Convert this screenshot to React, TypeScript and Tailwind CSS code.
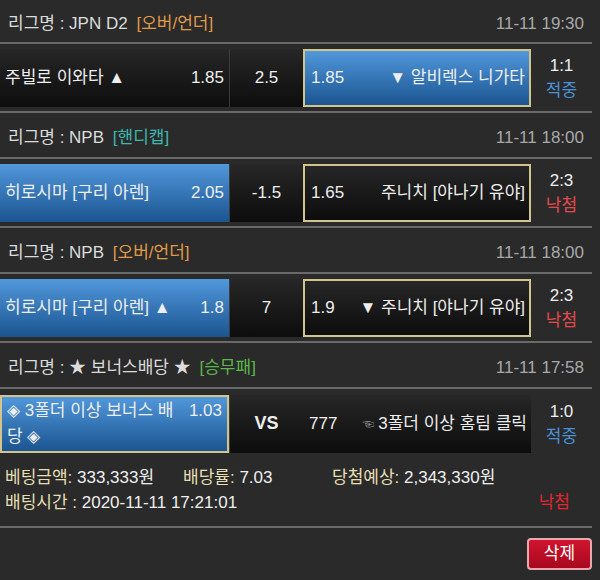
import React from 'react';

type CellProps = {
  blue?: boolean;
  selected?: boolean;
  className?: string;
  children: React.ReactNode;
};

const Cell: React.FC<CellProps> = ({ blue, selected, className = '', children }) => (
  <div
    className={`h-[58px] flex items-center ${
      blue ? 'bg-gradient-to-b from-[#5198dc] to-[#1b5591]' : 'bg-gradient-to-b from-[#272727] to-[#0d0d0d]'
    } ${selected ? 'border-2 border-[#d3c48c]' : ''} ${className}`}
  >
    {children}
  </div>
);

type BlockProps = {
  league: string;
  tag: string;
  tagColor: string;
  time: string;
  headerH: string;
  home: React.ReactNode;
  homeOdds: string;
  homeOddsTop?: boolean;
  homeBlue?: boolean;
  homeSel?: boolean;
  draw: React.ReactNode;
  away: React.ReactNode;
  awayOdds: string;
  awayBlue?: boolean;
  awaySel?: boolean;
  score: string;
  status: string;
  statusColor: string;
  last?: boolean;
};

const Block: React.FC<BlockProps> = (p) => (
  <div>
    <div className={`${p.headerH} flex items-center justify-between px-2 pt-[5px] border-b-2 border-[#6a6a6a]`}>
      <div className="text-[17px] text-[#dcdcdc]">
        {p.league} <span className={`ml-1 ${p.tagColor}`}>{p.tag}</span>
      </div>
      <div className="text-[17px] text-[#a8a8a8]">{p.time}</div>
    </div>
    <div className={`h-[69px] flex items-center ${p.last ? '' : 'border-b-2 border-[#6a6a6a]'}`}>
      <Cell blue={p.homeBlue} selected={p.homeSel} className="w-[229px] justify-between pl-[5px] pr-[5px]">
        {p.home}
        <span
          className={`text-[17px] text-[#eeeeee] ${p.homeOddsTop ? 'self-start leading-[26px] mt-[1px]' : ''}`}
        >
          {p.homeOdds}
        </span>
      </Cell>
      <Cell className="w-[74px] justify-center border-l border-[#3c3c3c]">
        <span className="text-[17px] text-[#eeeeee]">{p.draw}</span>
      </Cell>
      <Cell blue={p.awayBlue} selected={p.awaySel} className="w-[228px] justify-between pl-[6px] pr-[4px]">
        <span className="text-[17px] text-[#eeeeee]">{p.awayOdds}</span>
        {p.away}
      </Cell>
      <div className="w-[61px] flex flex-col items-center leading-[25px] text-[17px]">
        <span className="text-[#eeeeee]">{p.score}</span>
        <span className={p.statusColor}>{p.status}</span>
      </div>
    </div>
  </div>
);

const T: React.FC<{ children: React.ReactNode }> = ({ children }) => (
  <span className="text-[17px] text-[#eeeeee] whitespace-nowrap">{children}</span>
);

export default function App() {
  return (
    <div className="w-[600px] h-[580px] overflow-hidden bg-[#2a2a2a] font-['Liberation_Sans','Noto_Sans_CJK_KR',sans-serif]">
      <div className="w-[592px]">
        <Block
          headerH="h-[44px]"
          league="리그명 : JPN D2"
          tag="[오버/언더]"
          tagColor="text-[#e09a48]"
          time="11-11 19:30"
          home={<T>주빌로 이와타 ▲</T>}
          homeOdds="1.85"
          draw="2.5"
          awayOdds="1.85"
          away={<T>▼ 알비렉스 니가타</T>}
          awayBlue
          awaySel
          score="1:1"
          status="적중"
          statusColor="text-[#4a92d6]"
        />
        <Block
          headerH="h-[46px]"
          league="리그명 : NPB"
          tag="[핸디캡]"
          tagColor="text-[#3db7ae]"
          time="11-11 18:00"
          home={<T>히로시마 [구리 아렌]</T>}
          homeOdds="2.05"
          homeBlue
          draw="-1.5"
          awayOdds="1.65"
          away={<T>주니치 [야나기 유야]</T>}
          awaySel
          score="2:3"
          status="낙첨"
          statusColor="text-[#e24b4b]"
        />
        <Block
          headerH="h-[46px]"
          league="리그명 : NPB"
          tag="[오버/언더]"
          tagColor="text-[#e09a48]"
          time="11-11 18:00"
          home={<T>히로시마 [구리 아렌] ▲</T>}
          homeOdds="1.8"
          homeBlue
          draw="7"
          awayOdds="1.9"
          away={<T>▼ 주니치 [야나기 유야]</T>}
          awaySel
          score="2:3"
          status="낙첨"
          statusColor="text-[#e24b4b]"
        />
        <Block
          headerH="h-[46px]"
          league="리그명 : ★ 보너스배당 ★"
          tag="[승무패]"
          tagColor="text-[#5cb84a]"
          time="11-11 17:58"
          home={
            <span className="w-[170px] text-[17px] leading-[26px] text-[#eeeeee]">◈ 3폴더 이상 보너스 배당 ◈</span>
          }
          homeOdds="1.03"
          homeOddsTop
          homeBlue
          homeSel
          draw={<b className="text-[18px]">VS</b>}
          awayOdds="777"
          away={
            <span className="text-[17px] text-[#eeeeee] whitespace-nowrap">
              <span className="text-[12px] text-[#9a9a9a] mr-1">☜</span>3폴더 이상 홈팀 클릭
            </span>
          }
          score="1:0"
          status="적중"
          statusColor="text-[#4a92d6]"
          last
        />
        <div className="h-[70px] flex flex-col justify-center px-[5px] pb-[4px] leading-[25px] text-[17px] border-b-2 border-[#6a6a6a]">
          <div className="flex">
            <div className="w-[178px]">
              <span className="text-[#e6dfb2]">베팅금액:</span> <span className="text-[#eeeeee]">333,333원</span>
            </div>
            <div className="w-[149px]">
              <span className="text-[#e6dfb2]">배당률:</span> <span className="text-[#eeeeee]">7.03</span>
            </div>
            <div>
              <span className="text-[#e6dfb2]">당첨예상:</span> <span className="text-[#eeeeee]">2,343,330원</span>
            </div>
          </div>
          <div className="flex justify-between pr-[17px]">
            <div>
              <span className="text-[#e6dfb2]">배팅시간 :</span> <span className="text-[#eeeeee]">2020-11-11 17:21:01</span>
            </div>
            <span className="text-[#e0262e]">낙첨</span>
          </div>
        </div>
        <div className="flex justify-end pt-[10px]">
          <button className="w-[65px] h-[32px] rounded-[4px] border-2 border-[#e7a9ae] bg-gradient-to-b from-[#d0142e] to-[#a8081f] text-[17px] text-white">
            삭제
          </button>
        </div>
      </div>
    </div>
  );
}
